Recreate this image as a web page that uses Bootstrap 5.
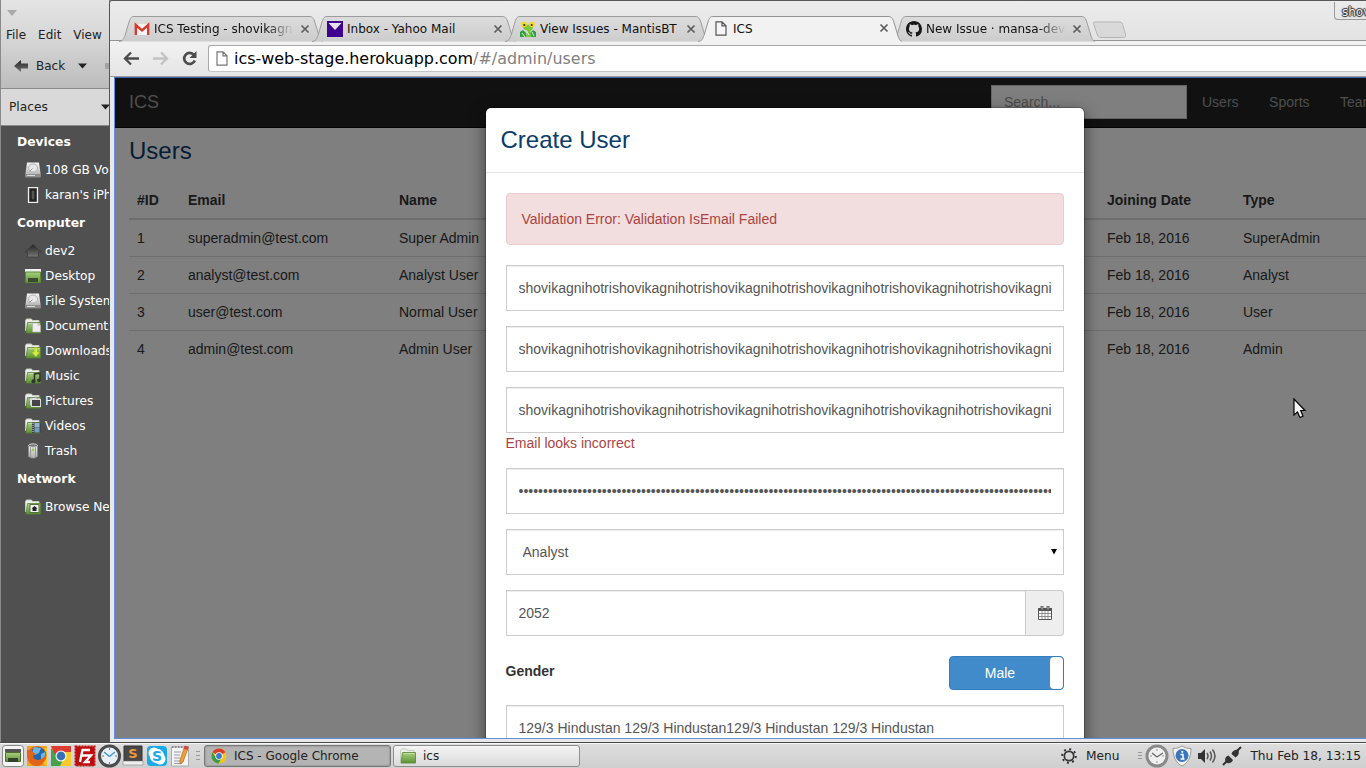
<!DOCTYPE html>
<html lang="en">
<head>
<meta charset="utf-8">
<title>ICS</title>
<link rel="stylesheet" href="https://cdn.jsdelivr.net/npm/bootstrap@5.3.0/dist/css/bootstrap.min.css">
<style>
html,body{height:100%;overflow:hidden}
body{font-family:"DejaVu Sans",sans-serif;font-size:12.2px;line-height:1.2;color:#222;width:1366px;height:768px;background:#808080}
svg{display:block;flex:none}
.upper{height:742px}
/* file manager */
.fm{width:109px;background:#505050;border-left:1px solid #8a8a8a}
.fm-head{height:89px;background:linear-gradient(#e4e4e4,#d6d6d6 45%,#bcbcbc);border-bottom:1px solid #8b8b8b;margin-left:-1px;font-size:12px}
.fm-places{height:37px;background:#d9d9d9;border-bottom:1px solid #8b8b8b;margin-left:-1px;padding-left:9px}
.fm h6{height:31px;line-height:33px;font-size:12.3px;font-weight:700;color:#fff;margin:0;padding-left:16px}
.fm li{height:25px;padding-left:24px;gap:4px;color:#fff;white-space:nowrap}
.fm li span{padding-top:2px}
/* browser window */
.chrome-win{background:#e8e8e8;border-left:1px solid #555;border-top:1px solid #575757;width:1257px;border-top-left-radius:4px}
.tabs{height:40px;padding:15px 0 0 9px;border-bottom:1px solid #949494;background:linear-gradient(#ebebeb,#e3e3e3)}
.btab{width:193px;height:25px;color:#111;font-size:12px;padding-left:15px}
.btab .shape{position:absolute;left:0;top:0}
.btab .face{z-index:2;width:176px}
.btab .ttl{width:139px;margin-left:4px;padding-top:1px;overflow:hidden;white-space:nowrap}
.btab .fade-out{-webkit-mask-image:linear-gradient(90deg,#000 112px,transparent 140px)}
.toolbar{height:36px;background:linear-gradient(#f2f2f2,#e5e5e5);border-bottom:1px solid #9a9a9a}
.omni{height:27px;background:#fff;border:1px solid #a9a9a9;border-right:0;border-bottom-color:#c4c4c4;border-radius:3px 0 0 3px;font-size:15.950px;color:#000;white-space:nowrap}
.user-tag{position:absolute;right:0;top:1px;width:32px;height:18px;border:1px solid #999;border-width:0 0 1px 1px;border-bottom-left-radius:4px;padding-left:7px;line-height:21px;color:#eee;font-size:12px;overflow:hidden;text-shadow:0 0 1px #333,1px 0 1px #333,-1px 0 1px #333,0 1px 1px #333,0 -1px 1px #333}
.viewport{margin-left:4px;height:662px;border:1px solid #5f8fe0;border-width:1px 0 1px 1px;border-top-color:#3d64b5;background:#fff;overflow:hidden;font:14px/20px "Liberation Sans",Arial,sans-serif;color:#333}
.appnav{height:50px;background:#222;border-bottom:1px solid #080808;color:#9d9d9d}
.appnav .brandname{font-size:18px;width:862px;margin-left:14px;padding-bottom:1px}
.appnav input{width:196px;height:34px;border:1px solid #ccc;border-radius:0;font-size:14px;padding:6px 12px;color:#555}
.appnav input::placeholder{color:#999;opacity:1}
.page-title,.dlg-title{font-size:24px;line-height:26px;font-weight:400;color:#0b3c6b;margin:0}
.page-title{padding:10px 14px 0}
.users{width:1330px;table-layout:fixed;margin:18px 0 0 14px;--bs-table-color:#333;--bs-table-bg:#fff;color:#333}
.users>:not(caption)>*>*{padding:8px;line-height:20px;border:0;white-space:nowrap}
.users thead th{border-bottom:2px solid #ddd!important}
.users tbody tr+tr td{border-top:1px solid #ddd!important}
.shade{position:absolute;inset:0;background:rgba(0,0,0,.5)}
.dlg{position:absolute;left:370px;top:29px;width:600px;height:760px;background:#fff;background-clip:padding-box;border:1px solid rgba(0,0,0,.2);border-radius:6px;box-shadow:0 5px 15px rgba(0,0,0,.5)}
.dlg-head{height:65px;border-bottom:1px solid #e5e5e5;padding:19px 14.500px 0}
.dlg-body{padding:20px 19px 0 20px;width:598px}
.dlg-body>*{width:558px}
.dlg .alert{height:52px;padding:15px 14.500px;margin-bottom:20px;background:#f2dede;border:1px solid #ebccd1;color:#a94442;border-radius:4px}
.dlg .form-control,.dlg .form-select{height:46px;font-size:14px;line-height:20px;border:1px solid #ccc;border-radius:0;color:#555;padding:6px 12px 6px 11.500px;margin-bottom:15px;background-color:#fff;box-shadow:inset 0 1px 1px rgba(0,0,0,.075)}
.dlg .form-select{padding-left:15.500px;background-image:none}
.arrow{position:absolute;right:6px;top:19px}
.addon{width:38px;background:#eee;border:1px solid #ccc;border-left:0;border-radius:0 4px 4px 0}
.gender{height:34px;margin:20px 0 15px}
.toggle{width:115px;height:34px;background:#428bca;border:1px solid #357ebd;border-radius:4px;color:#fff}
.toggle i{width:13px;background:#fff;border-radius:4px}
.cursor{position:absolute;left:1293px;top:398px}
/* panel */
.panel{height:26px;background:linear-gradient(#dedede,#cfcfcf);border-top:1px solid #4a4a4a;box-shadow:inset 0 1px #f6f6f6}
.panel .task{width:187px;height:22px;border:1px solid #8f8f8f;border-radius:3px;padding:1px 0 0 6px;gap:7px;font-size:12px;background:linear-gradient(#f4f4f4,#dadada)}
.panel .task.on{background:#b4b4b4;border-color:#777;box-shadow:inset 0 0 2px #777}
</style>
<script src="https://cdn.jsdelivr.net/npm/bootstrap@5.3.0/dist/js/bootstrap.bundle.min.js"></script>
</head>
<body>
<svg width="0" height="0" style="position:absolute">
<defs>
<linearGradient id="gr" x2="0" y2="1"><stop stop-color="#a9cf82"/><stop offset="1" stop-color="#5e9233"/></linearGradient>
<linearGradient id="sv" x2="0" y2="1"><stop stop-color="#f4f4f4"/><stop offset="1" stop-color="#aaa"/></linearGradient>
<linearGradient id="dk" x2="0" y2="1"><stop stop-color="#222"/><stop offset="1" stop-color="#777"/></linearGradient>
<linearGradient id="tg" x2="0" y2="1"><stop stop-color="#dcdcdc"/><stop offset="1" stop-color="#cdcdcd"/></linearGradient>
<symbol id="disk" viewBox="0 0 16 16"><path d="M2 .5h12l1.500 10.500v4H.5v-4z" fill="url(#sv)"/><path d="M.5 12h15v3.500H.5z" fill="#8d8d8d"/><ellipse cx="8" cy="6" rx="4.500" ry="4" fill="#e8e8e8" stroke="#b5b5b5"/><path d="M4.500 9.500l3-3" stroke="#999"/><path d="M2 13.500h8" stroke="#ddd"/></symbol>
<symbol id="folder" viewBox="0 0 16 16"><path d="M.5 13V2.500L1.500 1h5l1 1.500H14V5" fill="#eee" stroke="#c5cfbd"/><path d="M2.500 4.500h13V15H1z" fill="url(#gr)" stroke="#568330" stroke-width=".8"/><path d="M3.500 5.500h11" stroke="#c2e0a2"/></symbol>
<symbol id="desk" viewBox="0 0 16 16"><path d="M0 1h16v3H0z" fill="#f0f0f0"/><path d="M.5 4h15v10.500H.5z" fill="url(#gr)" stroke="#5a8a35"/><path d="M3 10h10v4H3z" fill="#3c4a30"/></symbol>
<symbol id="chrome" viewBox="0 0 16 16"><circle cx="8" cy="8" r="7.500" fill="#f2c71b"/><path d="M8 8L1.500 4.200A7.500 7.500 0 0114.500 4.300z" fill="#d9402c"/><path d="M8 8H3.500L1.500 4.200A7.500 7.500 0 007.500 15.500L11 9.500z" fill="#3b9c48"/><circle cx="8" cy="8" r="3.700" fill="#fff"/><circle cx="8" cy="8" r="2.900" fill="#3d77c9"/></symbol>
<symbol id="page" viewBox="0 0 12 15"><path d="M1 .8h6l4 4v9.400H1zM7 .8v4h4" fill="#fff" stroke="#777" stroke-width="1.200"/></symbol>
<symbol id="close" viewBox="0 0 10 10"><path d="M1.500 1.500l7 7M8.500 1.500l-7 7" stroke="#5d5d5d" stroke-width="1.700"/></symbol>
<symbol id="tabshape" viewBox="0 0 204 26"><path d="M0 25.500C4 25 4.500 23 6 19.500L10 6C11.500 1.500 12.500.5 15 .5H190C193 .5 194 1.500 195.500 5L200 20C201.500 24 202 25 204 25.500" fill="url(#tg)" stroke="#9c9c9c"/></symbol>
</defs>
</svg>

<div class="upper d-flex">
  <aside class="fm flex-shrink-0 overflow-hidden">
    <div class="fm-head">
      <svg width="109" height="26"><path d="M7 10h10l-5 6z" fill="#aaa"/></svg>
      <div class="d-flex" style="gap:12px;padding:2px 0 0 6px"><span>File</span><span>Edit</span><span>View</span></div>
      <div class="d-flex align-items-center" style="margin-top:16px;padding-left:14px">
        <svg width="15" height="14"><path d="M0 7l7-6v3.500h7v5H7V13z" fill="url(#dk)"/></svg><span style="margin-left:7px;padding-top:1px">Back</span>
        <svg width="10" height="6" style="margin-left:13px"><path d="M0 .5h9L4.500 5.500z" fill="#222"/></svg>
        <svg width="6" height="6" style="margin-left:17px"><path d="M0 0h6v6H0z" fill="#a5a5a5"/></svg>
      </div>
    </div>
    <div class="fm-places d-flex align-items-center justify-content-between"><span>Places</span><svg width="8" height="6"><path d="M0 .5h9L4.500 5.500z" fill="#222"/></svg></div>
    <h6>Devices</h6>
    <ul class="list-unstyled m-0">
      <li class="d-flex align-items-center"><svg width="16" height="16"><use href="#disk"/></svg><span>108 GB Volume</span></li>
      <li class="d-flex align-items-center"><svg width="16" height="16"><rect x="3.500" y=".5" width="9" height="15" fill="#333" stroke="#eee" stroke-width="1.300"/><rect x="6" y="3" width="4" height="10" fill="#555" stroke="#111"/></svg><span>karan's iPhone</span></li>
    </ul>
    <h6>Computer</h6>
    <ul class="list-unstyled m-0">
      <li class="d-flex align-items-center"><svg width="16" height="16"><path d="M8 1.500l8 7.500h-2.500v5h-11V9H0z" fill="url(#dk)" stroke="#333" stroke-width=".6"/></svg><span>dev2</span></li>
      <li class="d-flex align-items-center"><svg width="16" height="16"><use href="#desk"/></svg><span>Desktop</span></li>
      <li class="d-flex align-items-center"><svg width="16" height="16"><use href="#disk"/></svg><span>File System</span></li>
      <li class="d-flex align-items-center"><svg width="16" height="16"><use href="#folder"/><path d="M7.500 5H13l2.500 2.500V14h-8z" fill="#eee" stroke="#aaa" stroke-width=".6"/><path d="M12.500 5v3h3" fill="#ccc"/></svg><span>Documents</span></li>
      <li class="d-flex align-items-center"><svg width="16" height="16"><use href="#folder"/><path d="M9 4.500h3.500V9h2.500l-4.200 5-4.300-5H9z" fill="#d6ec3c" stroke="#88a82a" stroke-width=".5"/></svg><span>Downloads</span></li>
      <li class="d-flex align-items-center"><svg width="16" height="16"><use href="#folder"/><path d="M9.500 13V6l5.500-.8V12" fill="none" stroke="#333" stroke-width="1.600"/><circle cx="8.500" cy="13.300" r="2" fill="#333"/><circle cx="14" cy="12.300" r="1.900" fill="#333"/></svg><span>Music</span></li>
      <li class="d-flex align-items-center"><svg width="16" height="16"><use href="#folder"/><path d="M4 5l8-1 1 8-8 1z" fill="#ddd" stroke="#666" stroke-width=".6"/><rect x="6.500" y="6.500" width="9" height="7" fill="#444" stroke="#ddd"/></svg><span>Pictures</span></li>
      <li class="d-flex align-items-center"><svg width="16" height="16"><use href="#folder"/><rect x="7" y="4.500" width="9" height="10.500" fill="#444"/><rect x="9.500" y="5" width="5" height="4.500" fill="#8eb9d2"/><rect x="9.500" y="10" width="5" height="4.500" fill="#70a2c0"/><path d="M8 5v10" stroke="#ddd" stroke-dasharray="1"/></svg><span>Videos</span></li>
      <li class="d-flex align-items-center"><svg width="16" height="16"><path d="M3.500 2.500h9v11q-4.500 3.500-9 0z" fill="url(#sv)" stroke="#888" stroke-width=".6"/><path d="M5.500 4v10M10.500 4v10" stroke="#999"/><ellipse cx="8" cy="2.500" rx="4.500" ry="1.700" fill="#777" stroke="#ccc"/><path d="M6 8.500L8 4.500 10 7.500z" fill="#9c5"/></svg><span>Trash</span></li>
    </ul>
    <h6>Network</h6>
    <ul class="list-unstyled m-0">
      <li class="d-flex align-items-center"><svg width="16" height="16"><use href="#folder"/><rect x="5" y="5.500" width="9" height="8" fill="#f2f2f2" stroke="#56703f"/><path d="M9.500 7l3 2.500h-1V12h-4V9.500h-1z" fill="#222"/></svg><span>Browse Network</span></li>
    </ul>
  </aside>

  <main class="chrome-win position-relative flex-shrink-0 overflow-hidden">
    <div class="tabs d-flex">
      <div class="btab position-relative d-flex align-items-center flex-shrink-0">
        <svg class="shape" width="204" height="26"><use href="#tabshape"/></svg>
        <div class="face position-relative d-flex align-items-center">
          <svg width="16" height="16"><path d="M1 3h14v11H1z" fill="#f5f5f5"/><path d="M1.800 14V4L8 9.500 14.200 4v10" fill="none" stroke="#d93a30" stroke-width="2.400"/></svg>
          <span class="ttl fade-out">ICS Testing - shovikagnihotri</span><svg class="ms-auto" width="10" height="10"><use href="#close"/></svg>
        </div>
      </div>
      <div class="btab position-relative d-flex align-items-center flex-shrink-0">
        <svg class="shape" width="204" height="26"><use href="#tabshape"/></svg>
        <div class="face position-relative d-flex align-items-center">
          <svg width="16" height="16"><path d="M0 0h16v16H0z" fill="#40008f"/><path d="M1.500 2h13L8 9z" fill="#e8e2f0"/></svg>
          <span class="ttl">Inbox - Yahoo Mail</span><svg class="ms-auto" width="10" height="10"><use href="#close"/></svg>
        </div>
      </div>
      <div class="btab position-relative d-flex align-items-center flex-shrink-0">
        <svg class="shape" width="204" height="26"><use href="#tabshape"/></svg>
        <div class="face position-relative d-flex align-items-center">
          <svg width="16" height="16"><path d="M0 11l3-2 3 3v4H0zM16 11l-3-2-3 3v4h6z" fill="#2f9e3f"/><path d="M3 2l5 2 5-2v5l-3 4 2 5H6l1-5-4-4z" fill="#79c83c"/><circle cx="4" cy="3.500" r="2.800" fill="#f4d916"/><circle cx="12" cy="3.500" r="2.800" fill="#f4d916"/><circle cx="4.300" cy="4" r="1.100" fill="#333"/><circle cx="11.700" cy="4" r="1.100" fill="#333"/><path d="M2 12l3 4M6 9l3 5M12 11l2 4" stroke="#e4f6e0"/></svg>
          <span class="ttl">View Issues - MantisBT</span><svg class="ms-auto" width="10" height="10"><use href="#close"/></svg>
        </div>
      </div>
      <div class="btab position-relative d-flex align-items-center flex-shrink-0" style="z-index:1">
        <svg class="shape" width="204" height="26"><path d="M0 25.500C4 25 4.500 23 6 19.500L10 6C11.500 1.500 12.500.5 15 .5H190C193 .5 194 1.500 195.500 5L200 20C201.500 24 202 25 204 25.500V26H0z" fill="#f2f2f2"/><path d="M0 25.500C4 25 4.500 23 6 19.500L10 6C11.500 1.500 12.500.5 15 .5H190C193 .5 194 1.500 195.500 5L200 20C201.500 24 202 25 204 25.500" fill="none" stroke="#949494"/></svg>
        <div class="face position-relative d-flex align-items-center">
          <svg width="16" height="15" viewBox="-1 0 14 15"><path d="M1 .8h6l4 4v9.400H1zM7 .8v4h4" fill="#f6f6f6" stroke="#555" stroke-width="1.200"/></svg>
          <span class="ttl">ICS</span><svg class="ms-auto" width="10" height="10"><use href="#close"/></svg>
        </div>
      </div>
      <div class="btab position-relative d-flex align-items-center flex-shrink-0">
        <svg class="shape" width="204" height="26"><use href="#tabshape"/></svg>
        <div class="face position-relative d-flex align-items-center">
          <svg width="16" height="16" viewBox="0 0 16 16"><path fill="#191717" d="M8 0C3.580 0 0 3.580 0 8c0 3.540 2.290 6.530 5.470 7.590.4.070.55-.17.55-.38 0-.19-.01-.82-.01-1.490-2.010.37-2.530-.49-2.690-.94-.09-.23-.48-.94-.82-1.130-.28-.15-.68-.52-.01-.53.63-.01 1.080.58 1.230.82.72 1.210 1.870.87 2.330.66.070-.52.28-.87.510-1.070-1.780-.2-3.640-.89-3.640-3.950 0-.87.310-1.590.82-2.150-.08-.2-.36-1.020.08-2.120 0 0 .67-.21 2.200.82.64-.18 1.320-.27 2-.27s1.360.090 2 .27c1.530-1.040 2.200-.82 2.200-.82.440 1.100.16 1.920.080 2.120.51.560.82 1.270.82 2.150 0 3.070-1.870 3.750-3.650 3.950.29.250.54.730.54 1.480 0 1.070-.01 1.930-.01 2.200 0 .21.150.46.55.38A8.010 8.010 0 0016 8c0-4.420-3.580-8-8-8z"/></svg>
          <span class="ttl fade-out">New Issue · mansa-development</span><svg class="ms-auto" width="10" height="10"><use href="#close"/></svg>
        </div>
      </div>
      <svg width="34" height="18" style="margin:5px 0 0 8px"><path d="M3 1h24c2 0 3 .5 3.600 2.500l3 10c.5 2-.1 3-2 3H9c-2 0-3-.8-3.600-2.600L2 4C1 2 1.400 1 3 1z" fill="#d9d9d9" stroke="#b5b5b5"/></svg>
    </div>
    <div class="user-tag">shovik</div>
    <div class="toolbar d-flex" style="padding-left:13px">
      <svg width="85" height="34"><g fill="none" stroke-width="2.300"><path d="M16 17.500H2.500M8 11.500l-6 6 6 6" stroke="#4c4c4c"/><path d="M30 17.500h13.500M38 11.500l6 6-6 6" stroke="#c2c2c2"/><path d="M71 14A5.500 5.500 0 1071.800 19.500" stroke="#4c4c4c" stroke-width="2.700"/></g><path d="M73.500 10v7h-7z" fill="#4c4c4c"/></svg>
      <div class="omni flex-grow-1 d-flex align-items-center" style="margin-top:4px;padding-left:7px">
        <svg width="12" height="15" style="margin-right:6px"><use href="#page"/></svg><span>ics-web-stage.herokuapp.com<span style="color:#808080">/#/admin/users</span></span>
      </div>
    </div>
    <div class="viewport position-relative">
      <nav class="appnav d-flex">
        <div class="brandname align-self-center flex-shrink-0">ICS</div>
        <input class="form-control flex-shrink-0" placeholder="Search..." style="margin-top:7px">
        <div class="d-flex align-self-center" style="gap:30.500px;padding:0 0 2px 15px"><span>Users</span><span>Sports</span><span>Teams</span></div>
      </nav>
      <h3 class="page-title">Users</h3>
      <table class="table users">
        <colgroup><col style="width:51px"><col style="width:211px"><col style="width:708px"><col style="width:136px"><col></colgroup>
        <thead><tr><th>#ID</th><th>Email</th><th>Name</th><th>Joining Date</th><th>Type</th></tr></thead>
        <tbody>
          <tr><td>1</td><td>superadmin@test.com</td><td>Super Admin</td><td>Feb 18, 2016</td><td>SuperAdmin</td></tr>
          <tr><td>2</td><td>analyst@test.com</td><td>Analyst User</td><td>Feb 18, 2016</td><td>Analyst</td></tr>
          <tr><td>3</td><td>user@test.com</td><td>Normal User</td><td>Feb 18, 2016</td><td>User</td></tr>
          <tr><td>4</td><td>admin@test.com</td><td>Admin User</td><td>Feb 18, 2016</td><td>Admin</td></tr>
        </tbody>
      </table>
      <div class="shade"></div>
      <div class="dlg">
        <div class="dlg-head"><h4 class="dlg-title">Create User</h4></div>
        <div class="dlg-body">
          <div class="alert">Validation Error: Validation IsEmail Failed</div>
          <input class="form-control" value="shovikagnihotrishovikagnihotrishovikagnihotrishovikagnihotrishovikagnihotrishovikagnihotri">
          <input class="form-control" value="shovikagnihotrishovikagnihotrishovikagnihotrishovikagnihotrishovikagnihotrishovikagnihotri">
          <input class="form-control mb-0" value="shovikagnihotrishovikagnihotrishovikagnihotrishovikagnihotrishovikagnihotrishovikagnihotri">
          <div style="color:#a94442;margin:0 0 15px -.5px">Email looks incorrect</div>
          <input class="form-control" type="password" value="shovikagnihotrishovikagnihotrishovikagnihotrishovikagnihotrishovikagnihotrishovikagnihotrishovikagnihotrishovikagnihotri">
          <div class="position-relative">
            <select class="form-select"><option>Analyst</option></select>
            <svg class="arrow" width="8" height="7"><path d="M1 1h6L4 6.500z" fill="#000"/></svg>
          </div>
          <div class="d-flex" style="height:46px">
            <input class="form-control mb-0" value="2052">
            <div class="addon flex-shrink-0 d-flex align-items-center justify-content-center">
              <svg width="14" height="14"><path d="M.5 3h13v10.500H.5z" fill="#fff" stroke="#555"/><path d="M0 2h14v3H0z" fill="#555"/><path d="M3 0h2v4H3zM9 0h2v4H9z" fill="#bbb" stroke="#555" stroke-width=".9"/><path d="M4 5v8M7 5v8M10 5v8M1 7.500h12M1 10.500h12" stroke="#777" stroke-width=".8"/></svg>
            </div>
          </div>
          <div class="gender d-flex justify-content-between"><b style="padding-top:5px;margin-left:-.5px">Gender</b>
            <div class="toggle d-flex"><span class="flex-grow-1 text-center" style="padding-top:6px">Male</span><i></i></div>
          </div>
          <input class="form-control" value="129/3 Hindustan 129/3 Hindustan129/3 Hindustan 129/3 Hindustan">
        </div>
      </div>
    </div>
  </main>
</div>

<footer class="panel d-flex align-items-center">
  <div class="d-flex align-items-center" style="padding-left:2px;gap:2px">
    <svg width="22" height="22" viewBox="0 0 22 22"><rect x=".5" y=".5" width="21" height="21" rx="3" fill="#f5f5f5" stroke="#888"/><path d="M3 4h16v3H3z" fill="#555"/><path d="M3.500 7.500h15v9h-15z" fill="url(#gr)" stroke="#4c6f2c"/><path d="M6 13h10v4H6z" fill="#33402a"/></svg>
    <svg width="22" height="22" viewBox="0 0 22 22"><path d="M1 1h20v20H1z" fill="#f0a51d"/><circle cx="11" cy="11" r="10" fill="#e8681a"/><circle cx="12" cy="9.500" r="7.500" fill="#2367a8"/><path d="M8 2l7 1-2 5-4 2-3-2zM15 9l4-2v5l-4 3z" fill="#6ab6e4"/><path d="M1 5c3-1 5 2 9 4-3 1-4 3-1 5s8 1 11-5c1 8-5 12-10 12S0 15 1 5z" fill="#e4631a"/><path d="M18 3c3 4 4 11-1 15l4 3V3z" fill="#f7c521"/></svg>
    <svg width="22" height="22" viewBox="0 0 22 22"><path d="M1 1h20v20H1z" fill="#f5c92b"/><path d="M1 1h20v6H11l-5 7z" fill="#dc3c32"/><path d="M1 3l6 9 6 3-3 6H1z" fill="#45a14b"/><circle cx="11" cy="11" r="5.500" fill="#fff"/><circle cx="11" cy="11" r="4.400" fill="#3671b8"/></svg>
    <svg width="22" height="22" viewBox="0 0 22 22"><rect x="1.500" y="1.500" width="19" height="19" fill="#bf0d0d" stroke="#bf0d0d" stroke-width="2" stroke-dasharray="2 1"/><path d="M6 17L8.500 5H16M7.500 10.500H13M12 10.500h5L11 17h5" fill="none" stroke="#fff" stroke-width="2.300"/></svg>
    <svg width="23" height="24" viewBox="0 0 23 24" style="margin:0 -1px 0 0"><circle cx="11.500" cy="12" r="10" fill="#e9f0f8" stroke="#4b4b4b" stroke-width="3"/><path d="M11.500 12.500L6 8M11.500 12.500L17 8" stroke="#3993d0" stroke-width="1.400"/><path d="M11.500 4v2M11.500 18v2M4 12h2M17 12h2" stroke="#777"/></svg>
    <svg width="22" height="22" viewBox="0 0 22 22"><path d="M2 1h18v15H2z" fill="#484848" stroke="#333"/><path d="M1 16h20v4H1z" fill="#eee" stroke="#888" stroke-width=".6"/><text x="11" y="13" text-anchor="middle" font-size="13" font-weight="700" fill="#f0983a">S</text></svg>
    <svg width="22" height="22" viewBox="0 0 22 22"><rect x="1" y="1" width="20" height="20" rx="4" fill="#19a9e8"/><circle cx="8" cy="8" r="5.500" fill="#fff"/><circle cx="14" cy="14" r="5.500" fill="#fff"/><circle cx="11" cy="11" r="7.200" fill="#fff"/><text x="11" y="16" text-anchor="middle" font-size="14" font-weight="700" fill="#19a9e8">S</text></svg>
    <svg width="22" height="22" viewBox="0 0 22 22"><path d="M1.500 2h17v19h-17z" fill="#f4f4f4" stroke="#aaa"/><path d="M2 2h17" stroke="#888" stroke-width="2" stroke-dasharray="1.500"/><path d="M4 7h7M4 10h6M4 13h6M4 16h10M4 18.500h8" stroke="#99a"/><path d="M14.500 2L18 3.500 13 17l-3 2v-4z" fill="#f0a030" stroke="#a06018" stroke-width=".6"/><path d="M15 .5l3.500 1.500-1 3L13.500 4z" fill="#d9483c"/></svg>
  </div>
  <svg width="4" height="9" style="margin:0 4px 0 4px"><path d="M0 .5h4M0 4.500h4M0 8.500h4" stroke="#999"/></svg>
  <div class="task on d-flex align-items-center"><svg width="16" height="16"><use href="#chrome"/></svg>ICS - Google Chrome</div>
  <div class="task d-flex align-items-center" style="margin-left:2px"><svg width="16" height="16"><use href="#folder"/></svg>ics</div>
  <div class="d-flex align-items-center ms-auto" style="padding-right:5px">
    <svg width="16" height="16" viewBox="0 0 16 16"><circle cx="8" cy="8" r="6.800" fill="none" stroke="#333" stroke-width="2" stroke-dasharray="2 3.340"/><circle cx="8" cy="8" r="4.700" fill="none" stroke="#333" stroke-width="1.700"/></svg>
    <span style="margin:1px 19px 0 9px">Menu</span>
    <svg width="4" height="8"><path d="M0 .5h4M0 3.500h4M0 6.500h4" stroke="#999"/></svg>
    <svg width="24" height="24" viewBox="0 0 24 24" style="margin-left:3px"><circle cx="12" cy="12" r="10" fill="#f0f0f0" stroke="#8a8a8a" stroke-width="3"/><path d="M12 13L7 9M12 13l6-4" stroke="#666" stroke-width="1.200"/><path d="M12 5v2M12 17v2M5 12h2M17 12h2" stroke="#999"/></svg>
    <svg width="20" height="22" viewBox="0 0 20 22" style="margin-left:3px"><path d="M10 1c3 2 6 2.500 9 2.500C19 12 16 18 10 21 4 18 1 12 1 3.500 4 3.500 7 3 10 1z" fill="#f2f2f2" stroke="#999"/><circle cx="10" cy="10.500" r="6.500" fill="#3a76bd"/><path d="M8.500 9.500H11V14M8.500 14h4" fill="none" stroke="#fff" stroke-width="1.500"/><circle cx="10.300" cy="6.800" r="1.100" fill="#fff"/></svg>
    <svg width="18" height="16" viewBox="0 0 18 16" style="margin-left:6px"><path d="M0 5h3l4-4v14l-4-4H0z" fill="#333"/><path d="M9 5q2 3 0 6M12 3.500q3 4.500 0 9M14.500 1.500q5 6.500 0 13" fill="none" stroke="#555" stroke-width="1.500"/></svg>
    <svg width="20" height="20" viewBox="0 0 20 20" style="margin-left:6px"><path d="M1 19l5-5M14 6l5-5" stroke="#333" stroke-width="2"/><path d="M3.500 16.500c-1-4 0-6 3-7l4.500 4.500c-1 3-4 4-7.500 2.500zM9.500 8c.5-3 4-5 7-4 1 3 0 6-3 7.500z" fill="#333"/></svg>
    <span style="margin:1px 0 0 8px">Thu Feb 18, 13:15</span>
  </div>
</footer>
<svg class="cursor" width="14" height="21"><path d="M1 1v16l3.500-3 2.500 5.500 3-1.300L7.700 12.500H12z" fill="#f4f4f4" stroke="#000" stroke-width="1.200"/></svg>
</body>
</html>
